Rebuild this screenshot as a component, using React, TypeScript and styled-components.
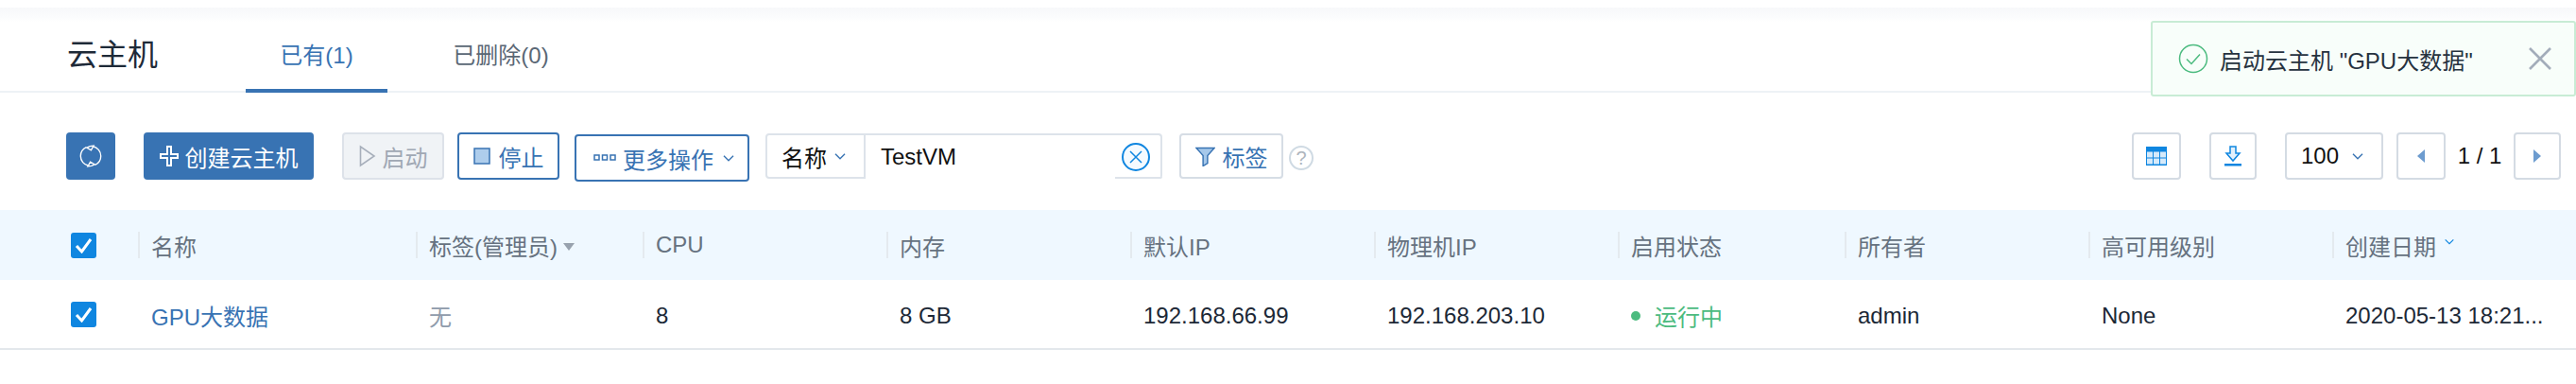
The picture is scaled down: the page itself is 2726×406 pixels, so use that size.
import React from 'react'
import styled, { createGlobalStyle, css } from 'styled-components'

const GlobalStyle = createGlobalStyle`
  html, body {
    margin: 0;
    padding: 0;
    background: #fff;
  }
  body {
    font-family: "Liberation Sans", "Noto Sans CJK SC", sans-serif;
    font-size: 24px;
    color: #1c2836;
  }
  * {
    box-sizing: border-box;
  }
`

const primary = '#3873b3'
const bright = '#0f86e0'

const columns = [
  { title: '名称', value: 'GPU大数据', kind: 'link' },
  { title: '标签(管理员)', value: '无', kind: 'muted', caret: true },
  { title: 'CPU', value: '8' },
  { title: '内存', value: '8 GB' },
  { title: '默认IP', value: '192.168.66.99' },
  { title: '物理机IP', value: '192.168.203.10' },
  { title: '启用状态', value: '运行中', kind: 'status' },
  { title: '所有者', value: 'admin' },
  { title: '高可用级别', value: 'None' },
  { title: '创建日期', value: '2020-05-13 18:21...', sort: true },
]

const Chevron = ({ color = primary, size = 14 }: { color?: string; size?: number }) => (
  <svg width={size} height={size * 0.6} viewBox="0 0 16 10" fill="none">
    <path d="M2 2l6 6 6-6" stroke={color} strokeWidth="1.6" />
  </svg>
)

const CheckMark = () => (
  <svg width="19" height="17" viewBox="0 0 19 17" fill="none">
    <path d="M2 9l5.5 6L17 2" stroke="#fff" strokeWidth="3" />
  </svg>
)

export default function App() {
  return (
    <Page>
      <GlobalStyle />
      <TopBand />
      <PageHeader>
        <Title>云主机</Title>
        <Tabs>
          <Tab $active>已有(1)</Tab>
          <Tab>已删除(0)</Tab>
        </Tabs>
      </PageHeader>

      <Toolbar>
        <Left>
          <SolidButton $square>
            <svg width="26" height="26" viewBox="0 0 34 34" fill="none" stroke="#fff" strokeWidth="1.8">
              <path d="M11 4.6C5.8 7 3 11.4 3 17c0 6.5 4.5 12 11 13.4" />
              <path d="M23 29.4c5.2-2.4 8-6.8 8-12.4 0-6.5-4.5-12-11-13.4" />
              <path d="M16 3.5l5-.8-3.500 6.300-6-3.500z" fill={primary} />
              <path d="M18 30.500l-5 .8 3.500-6.300 6 3.500z" fill={primary} />
            </svg>
          </SolidButton>
          <SolidButton $gap={30}>
            <svg width="20" height="22" viewBox="0 0 20 22" fill="none" stroke="#fff" strokeWidth="2">
              <path d="M8 1h4v8h7v4h-7v8H8v-8H1V9h7z" fill={primary} />
            </svg>
            创建云主机
          </SolidButton>
          <DisabledButton>
            <svg width="18" height="24" viewBox="0 0 18 24" fill="none" stroke="#a7afbb" strokeWidth="1.6">
              <path d="M1.5 2v20L16 12z" />
            </svg>
            启动
          </DisabledButton>
          <OutlineButton $gap={14}>
            <svg width="18" height="18" viewBox="0 0 18 18">
              <rect x="1" y="1" width="16" height="16" fill="#aecdec" stroke={primary} strokeWidth="1.5" />
            </svg>
            停止
          </OutlineButton>
          <MoreButton>
            <svg width="24" height="8" viewBox="0 0 24 8" fill="none" stroke={primary} strokeWidth="1.5">
              <rect x="1" y="1" width="5" height="5" />
              <rect x="9.5" y="1" width="5" height="5" />
              <rect x="18" y="1" width="5" height="5" />
            </svg>
            <MoreLabel>更多操作</MoreLabel>
            <Chevron />
          </MoreButton>
          <SearchGroup>
            <SearchField>
              名称
              <Chevron />
            </SearchField>
            <SearchInput>
              TestVM
              <ClearIcon>
                <svg width="14" height="14" viewBox="0 0 14 14" fill="none" stroke={bright} strokeWidth="1.5">
                  <path d="M1 1l12 12M13 1L1 13" />
                </svg>
              </ClearIcon>
            </SearchInput>
          </SearchGroup>
          <TagButton>
            <svg width="21" height="21" viewBox="0 0 22 22">
              <path d="M1 1.5h20l-7.5 8.500v8.500l-5 3V10z" fill="#a6c8ea" stroke={primary} strokeWidth="1.5" />
            </svg>
            标签
          </TagButton>
          <Help>?</Help>
        </Left>
        <Right>
          <IconButton>
            <svg width="22" height="20" viewBox="0 0 22 20">
              <rect x="0" y="0" width="22" height="20" fill={bright} />
              {[0, 1, 2].map((c) =>
                [0, 1].map((r) => (
                  <rect key={`${c}-${r}`} x={1 + c * 7} y={5.5 + r * 7} width="6" height="6" fill="#d6eafa" />
                ))
              )}
            </svg>
          </IconButton>
          <IconButton $space={30} $narrow>
            <svg width="20" height="22" viewBox="0 0 20 22" fill="none">
              <path d="M7 1h6v7h4l-7 8-7-8h4z" stroke={bright} strokeWidth="1.5" fill="#e3f1fc" />
              <rect x="1" y="19" width="18" height="2.5" fill={bright} />
            </svg>
          </IconButton>
          <PageSize>
            100
            <Chevron />
          </PageSize>
          <IconButton $space={14}>
            <Arrow $side="left" />
          </IconButton>
          <PageText>1 / 1</PageText>
          <IconButton $narrow>
            <Arrow $side="right" />
          </IconButton>
        </Right>
      </Toolbar>

      <Table>
        <HeadRow>
          <CheckCell>
            <CheckBox>
              <CheckMark />
            </CheckBox>
          </CheckCell>
          {columns.map((col) => (
            <HeadCell key={col.title}>
              {col.title}
              {col.caret && <Caret />}
              {col.sort && (
                <SortMark>
                  <Chevron color={bright} size={12} />
                </SortMark>
              )}
            </HeadCell>
          ))}
        </HeadRow>
        <BodyRow>
          <CheckCell>
            <CheckBox>
              <CheckMark />
            </CheckBox>
          </CheckCell>
          {columns.map((col) => (
            <BodyCell key={col.title} $kind={col.kind}>
              {col.kind === 'status' && <Dot />}
              {col.value}
            </BodyCell>
          ))}
        </BodyRow>
      </Table>

      <Toast>
        <svg width="32" height="32" viewBox="0 0 32 32" fill="none" stroke="#4cbb7f" strokeWidth="1.5">
          <circle cx="16" cy="16" r="14.5" />
          <path d="M9 16.5l5 5 9-10" />
        </svg>
        <ToastText>启动云主机 "GPU大数据"</ToastText>
        <svg width="26" height="26" viewBox="0 0 26 26" fill="none" stroke="#a3adba" strokeWidth="2.6">
          <path d="M2 2l22 22M24 2L2 24" />
        </svg>
      </Toast>
    </Page>
  )
}

const Page = styled.div`
  position: relative;
  width: 2726px;
  height: 406px;
  overflow: hidden;
  background: #fff;
`
const TopBand = styled.div`
  height: 15px;
  margin-top: 8px;
  margin-bottom: -8px;
  background: linear-gradient(#f7f8fa, #fbfcfd 70%, #fff);
`
const PageHeader = styled.header`
  display: flex;
  height: 83px;
  padding-left: 71px;
  border-bottom: 2px solid #eef2f6;
`
const Title = styled.h1`
  margin: 20px 0 0;
  width: 189px;
  font-size: 32px;
  font-weight: 400;
  line-height: 46px;
  color: #1e2a38;
`
const Tabs = styled.nav`
  display: flex;
  gap: 45px;
`
const Tab = styled.a<{ $active?: boolean }>`
  width: 150px;
  padding-top: 27px;
  height: 83px;
  margin-bottom: -2px;
  text-align: center;
  line-height: 34px;
  color: #5a6775;
  white-space: nowrap;
  ${({ $active }) =>
    $active &&
    css`
      color: ${primary};
      border-bottom: 4px solid ${primary};
    `}
`
const Toolbar = styled.div`
  display: flex;
  justify-content: space-between;
  align-items: center;
  height: 50px;
  margin-top: 42px;
  padding: 0 16px 0 70px;
`
const Left = styled.div`
  display: flex;
  align-items: center;
`
const Right = styled.div`
  display: flex;
  align-items: center;
`
const buttonBase = css`
  display: flex;
  align-items: center;
  justify-content: center;
  height: 50px;
  border-radius: 4px;
  white-space: nowrap;
`
const SolidButton = styled.button<{ $square?: boolean; $gap?: number }>`
  ${buttonBase}
  width: ${({ $square }) => ($square ? '52px' : '180px')};
  margin-left: ${({ $gap }) => $gap || 0}px;
  gap: 7px;
  padding: 0;
  border: none;
  background: ${primary};
  color: #fff;
  font: inherit;
`
const DisabledButton = styled.div`
  ${buttonBase}
  width: 108px;
  margin-left: 30px;
  gap: 7px;
  background: #f0f3f6;
  border: 2px solid #dde2e9;
  color: #a0a8b4;
`
const OutlineButton = styled.div<{ $gap?: number }>`
  ${buttonBase}
  width: 108px;
  margin-left: ${({ $gap }) => $gap || 0}px;
  gap: 9px;
  background: #fff;
  border: 2px solid ${primary};
  color: ${primary};
`
const MoreButton = styled.div`
  ${buttonBase}
  justify-content: flex-start;
  width: 185px;
  margin: 4px 0 0 16px;
  padding-left: 18px;
  gap: 7px;
  background: #fff;
  border: 2px solid ${primary};
  color: ${primary};
`
const MoreLabel = styled.span`
  margin-right: 2px;
`
const SearchGroup = styled.div`
  display: flex;
  height: 48px;
  margin-left: 17px;
`
const SearchField = styled.div`
  display: flex;
  align-items: center;
  gap: 7px;
  width: 106px;
  padding-left: 15px;
  border: 2px solid #dde3ea;
  border-radius: 4px 0 0 4px;
  color: #111;
`
const SearchInput = styled.div`
  position: relative;
  display: flex;
  align-items: center;
  width: 314px;
  padding-left: 16px;
  border-top: 2px solid #dde3ea;
  border-right: 2px solid #dde3ea;
  border-radius: 0 4px 4px 0;
  color: #111;
  &::after {
    content: '';
    position: absolute;
    right: -2px;
    bottom: 0;
    width: 50px;
    height: 2px;
    background: #dde3ea;
    border-radius: 0 0 4px 0;
  }
`
const ClearIcon = styled.span`
  position: absolute;
  right: 11px;
  top: 8px;
  display: flex;
  align-items: center;
  justify-content: center;
  width: 30px;
  height: 30px;
  border: 2px solid ${bright};
  border-radius: 50%;
  background: #f4faff;
`
const TagButton = styled.div`
  ${buttonBase}
  width: 110px;
  height: 48px;
  margin-left: 18px;
  gap: 8px;
  border: 2px solid #d6dde5;
  color: ${primary};
`
const Help = styled.span`
  display: flex;
  align-items: center;
  justify-content: center;
  width: 26px;
  height: 26px;
  margin: 4px 0 0 6px;
  border: 2px solid #cfdae3;
  border-radius: 50%;
  color: #aeb5bd;
  font-size: 20px;
`
const IconButton = styled.div<{ $space?: number; $narrow?: boolean }>`
  ${buttonBase}
  width: ${({ $narrow }) => ($narrow ? '50px' : '52px')};
  margin-left: ${({ $space }) => $space || 0}px;
  border: 2px solid #d4dbe3;
`
const PageSize = styled.div`
  ${buttonBase}
  justify-content: flex-start;
  width: 104px;
  margin-left: 30px;
  padding-left: 15px;
  gap: 13px;
  border: 2px solid #d4dbe3;
  color: #111;
`
const PageText = styled.span`
  width: 72px;
  text-align: center;
  color: #111;
`
const Arrow = styled.span<{ $side: 'left' | 'right' }>`
  width: 0;
  height: 0;
  border-top: 7px solid transparent;
  border-bottom: 7px solid transparent;
  ${({ $side }) =>
    $side === 'left'
      ? css`
          border-right: 8px solid #6d9ccf;
        `
      : css`
          border-left: 8px solid #6d9ccf;
        `}
`
const Table = styled.div`
  margin-top: 32px;
`
const rowGrid = css`
  display: grid;
  grid-template-columns: 146px 294px 240px 258px 258px 258px 258px 240px 258px 258px 258px;
  align-items: center;
`
const HeadRow = styled.div`
  ${rowGrid}
  height: 74px;
  background: #eff8ff;
`
const BodyRow = styled.div`
  ${rowGrid}
  height: 74px;
  background: #fff;
  border-bottom: 2px solid #e3e8ec;
`
const CheckCell = styled.div`
  padding-left: 75px;
`
const CheckBox = styled.span`
  display: flex;
  align-items: center;
  justify-content: center;
  width: 27px;
  height: 27px;
  border-radius: 3px;
  background: ${bright};
`
const HeadCell = styled.div`
  display: flex;
  align-items: center;
  height: 28px;
  padding-left: 12px;
  border-left: 2px solid #e4eaef;
  color: #66727f;
  white-space: nowrap;
`
const Caret = styled.span`
  width: 0;
  height: 0;
  margin: 4px 0 0 6px;
  border-left: 6px solid transparent;
  border-right: 6px solid transparent;
  border-top: 8px solid #98a2ae;
`
const SortMark = styled.span`
  display: flex;
  margin: -6px 0 0 8px;
`
const BodyCell = styled.div<{ $kind?: string }>`
  display: flex;
  align-items: center;
  padding: 3px 0 0 14px;
  white-space: nowrap;
  color: ${({ $kind }) =>
    $kind === 'link' ? primary : $kind === 'muted' ? '#8f9bab' : $kind === 'status' ? '#4cbb7f' : '#1c2836'};
`
const Dot = styled.span`
  width: 10px;
  height: 10px;
  margin-right: 15px;
  border-radius: 50%;
  background: #4cbb7f;
`
const Toast = styled.div`
  position: absolute;
  top: 22px;
  left: 2276px;
  display: flex;
  align-items: center;
  width: 450px;
  height: 80px;
  padding: 0 23px 0 27px;
  background: #f8fefa;
  border: 2px solid #c8ecd5;
  border-radius: 3px;
`
const ToastText = styled.span`
  flex: 1;
  margin-left: 12px;
  color: #26323f;
  white-space: nowrap;
`
